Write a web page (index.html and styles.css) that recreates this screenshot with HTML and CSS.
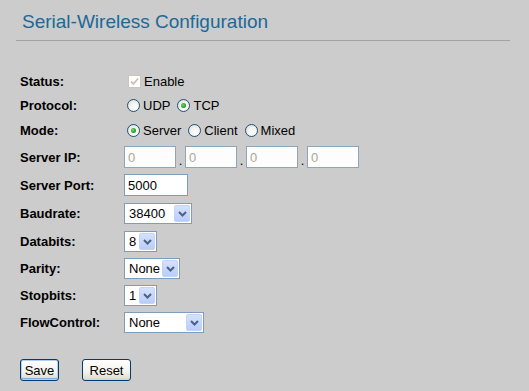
FILE: index.html
```html
<!DOCTYPE html>
<html lang="en">
  <head>
    <meta charset="UTF-8" />
    <title>Serial-Wireless Configuration</title>
    <link rel="stylesheet" href="styles.css">
  </head>
  <body>
    <header class="head">
      <h1>Serial-Wireless Configuration</h1>
    </header>

    <form class="config">
      <div class="row r1">
        <span class="lbl">Status:</span>
        <div class="field">
          <span class="check"><svg width="9" height="9" viewBox="0 0 9 9"><polyline points="1,4.5 3.5,7 8,1.5" fill="none" stroke="#c6c3b6" stroke-width="1.8"/></svg></span>
          <span class="opt">Enable</span>
        </div>
      </div>

      <div class="row r2">
        <span class="lbl">Protocol:</span>
        <div class="field">
          <span class="radio"></span><span class="opt">UDP</span>
          <span class="radio on"></span><span class="opt">TCP</span>
        </div>
      </div>

      <div class="row r3">
        <span class="lbl">Mode:</span>
        <div class="field">
          <span class="radio on"></span><span class="opt">Server</span>
          <span class="radio"></span><span class="opt">Client</span>
          <span class="radio"></span><span class="opt">Mixed</span>
        </div>
      </div>

      <div class="row r4">
        <span class="lbl">Server IP:</span>
        <div class="field">
          <input class="txt ip" type="text" value="0" disabled>
          <span class="dot">.</span>
          <input class="txt ip" type="text" value="0" disabled>
          <span class="dot">.</span>
          <input class="txt ip" type="text" value="0" disabled>
          <span class="dot">.</span>
          <input class="txt ip" type="text" value="0" disabled>
        </div>
      </div>

      <div class="row r5">
        <span class="lbl">Server Port:</span>
        <div class="field">
          <input class="txt port" type="text" value="5000">
        </div>
      </div>

      <div class="row r6">
        <span class="lbl">Baudrate:</span>
        <div class="field">
          <div class="sel w-baud"><span class="val">38400</span><span class="arr"><svg width="9" height="6" viewBox="0 0 9 6"><polyline points="1,1 4.5,4.5 8,1" fill="none" stroke="#4d6185" stroke-width="2"/></svg></span></div>
        </div>
      </div>

      <div class="row r7">
        <span class="lbl">Databits:</span>
        <div class="field">
          <div class="sel w-small"><span class="val">8</span><span class="arr"><svg width="9" height="6" viewBox="0 0 9 6"><polyline points="1,1 4.5,4.5 8,1" fill="none" stroke="#4d6185" stroke-width="2"/></svg></span></div>
        </div>
      </div>

      <div class="row r8">
        <span class="lbl">Parity:</span>
        <div class="field">
          <div class="sel w-parity"><span class="val">None</span><span class="arr"><svg width="9" height="6" viewBox="0 0 9 6"><polyline points="1,1 4.5,4.5 8,1" fill="none" stroke="#4d6185" stroke-width="2"/></svg></span></div>
        </div>
      </div>

      <div class="row r9">
        <span class="lbl">Stopbits:</span>
        <div class="field">
          <div class="sel w-small"><span class="val">1</span><span class="arr"><svg width="9" height="6" viewBox="0 0 9 6"><polyline points="1,1 4.5,4.5 8,1" fill="none" stroke="#4d6185" stroke-width="2"/></svg></span></div>
        </div>
      </div>

      <div class="row r10">
        <span class="lbl">FlowControl:</span>
        <div class="field">
          <div class="sel w-flow"><span class="val">None</span><span class="arr"><svg width="9" height="6" viewBox="0 0 9 6"><polyline points="1,1 4.5,4.5 8,1" fill="none" stroke="#4d6185" stroke-width="2"/></svg></span></div>
        </div>
      </div>
    </form>

    <div class="buttons">
      <button class="btn save" type="button">Save</button>
      <button class="btn reset" type="button">Reset</button>
    </div>
  </body>
</html>
```

FILE: styles.css
```css
body {
  margin: 0;
  background-color: #cccccc;
  font-family: "Liberation Sans", Arial, sans-serif;
  font-size: 13px;
  color: #000;
}

.head {
  box-sizing: border-box;
  width: 494px;
  margin-left: 16px;
  padding: 10px 0 6px 6px;
  border-bottom: 1px solid #a2a2a2;
}

h1 {
  margin: 0;
  font-size: 19px;
  line-height: 24px;
  font-weight: normal;
  color: #1d6898;
}

.config {
  margin: 28px 0 0 20px;
}

.row {
  display: flex;
  align-items: center;
  height: 27px;
}

.r1,
.r2 {
  height: 24px;
}

.r3 {
  height: 26px;
}

.r4,
.r5 {
  height: 28px;
}

.r6 {
  height: 29px;
}

.lbl {
  width: 104px;
  font-weight: bold;
}

.field {
  display: flex;
  align-items: center;
}

.opt {
  margin-right: 4px;
}

.check {
  box-sizing: border-box;
  width: 13px;
  height: 13px;
  margin: 0 3px 0 4px;
  border: 1px solid #cac8bb;
  background-color: #fff;
  display: flex;
  align-items: center;
  justify-content: center;
}

.radio {
  box-sizing: border-box;
  width: 13px;
  height: 13px;
  margin: 0 3px 0 3px;
  border-radius: 50%;
  border: 1px solid #1c5180;
  background: radial-gradient(circle at 60% 65%, #ffffff 0%, #f4f3ee 45%, #d6d4c9 100%);
  position: relative;
}

.radio.on::after {
  content: "";
  position: absolute;
  left: 3px;
  top: 3px;
  width: 5px;
  height: 5px;
  border-radius: 50%;
  background: radial-gradient(circle at 40% 40%, #72d772, #21a121 60%, #1a8a1a);
}

.txt {
  box-sizing: border-box;
  height: 22px;
  margin: 0;
  padding: 1px 3px;
  border: 1px solid #7f9db9;
  background-color: #fff;
  font-family: "Liberation Sans", Arial, sans-serif;
  font-size: 13px;
  color: #000;
}

.ip {
  width: 52px;
}

.txt:disabled {
  color: #aca899;
  border-color: #8ea6bb;
  background-color: #fdfdfd;
}

.dot {
  width: 9px;
  text-align: center;
  align-self: flex-end;
  line-height: 14px;
}

.port {
  width: 64px;
}

.sel {
  box-sizing: border-box;
  height: 21px;
  border: 1px solid #7f9db9;
  background-color: #fff;
  display: flex;
  align-items: center;
  justify-content: space-between;
  padding: 1px;
}

.val {
  padding-left: 3px;
}

.arr {
  box-sizing: border-box;
  width: 16px;
  height: 17px;
  border: 1px solid #c3d3fd;
  border-radius: 2px;
  background: linear-gradient(#d5e2fc, #b9cdf8);
  display: flex;
  align-items: center;
  justify-content: center;
}

.w-baud {
  width: 68px;
}

.w-small {
  width: 33px;
}

.w-parity {
  width: 56px;
}

.w-flow {
  width: 80px;
}

.buttons {
  display: flex;
  gap: 23px;
  margin: 23px 0 0 20px;
}

.btn {
  box-sizing: border-box;
  height: 22px;
  padding: 0;
  border: 1px solid #003c74;
  border-radius: 3px;
  background: linear-gradient(#ffffff, #f3f2ec 60%, #e3e0d4 90%, #d6d0c5);
  font-family: "Liberation Sans", Arial, sans-serif;
  font-size: 13px;
  color: #000;
}

.save {
  width: 39px;
  box-shadow: inset 0 0 0 1px #b8cdf4, inset 0 -1px 0 1px #89a6de;
}

.reset {
  width: 49px;
}
```
